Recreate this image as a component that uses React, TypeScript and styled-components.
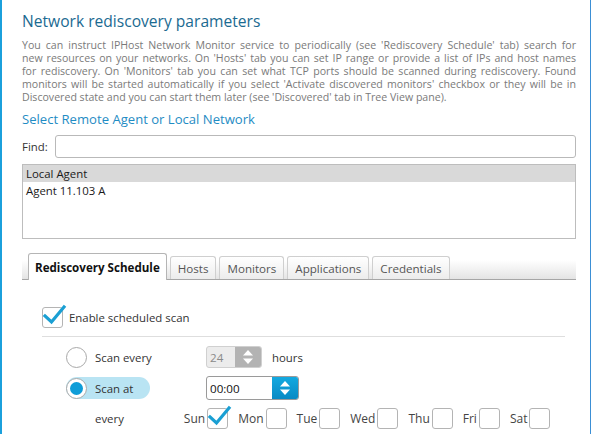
import React from 'react';
import styled, { createGlobalStyle } from 'styled-components';

const GlobalStyle = createGlobalStyle`
  html, body {
    margin: 0;
    padding: 0;
    background: #fff;
  }
  body {
    font-family: 'Open Sans', 'Liberation Sans', sans-serif;
  }
`;

// Styles

const Window = styled.div`
  width: 591px;
  height: 434px;
  box-sizing: border-box;
  border-left: 2px solid #1ba0dc;
  border-right: 1px solid #3b8fd5;
  background: #fff;
  overflow: hidden;
  display: flex;
  flex-direction: column;
  padding: 0 14px 0 20px;
`;

const Title = styled.h1`
  margin: 11px 0 0;
  font-size: 15.6px;
  line-height: 21px;
  font-weight: 500;
  color: #1b6a91;
`;

const Intro = styled.div`
  margin-top: 7px;
  font-size: 10.6px;
  line-height: 13px;
  color: #7a7a7a;
`;

const IntroLine = styled.div<{ $last?: boolean }>`
  text-align: ${(p) => (p.$last ? 'left' : 'justify')};
  text-align-last: ${(p) => (p.$last ? 'left' : 'justify')};
  white-space: nowrap;
`;

const Subtitle = styled.h2`
  margin: 6px 0 0;
  font-size: 13.1px;
  line-height: 18px;
  font-weight: 400;
  color: #1f8cc4;
`;

const FindRow = styled.div`
  margin-top: 7px;
  display: flex;
  align-items: center;
  gap: 7px;
`;

const Label = styled.span`
  font-size: 11.4px;
  color: #333;
  white-space: nowrap;
`;

const FindInput = styled.div`
  flex: 1;
  height: 21px;
  border: 1px solid #b9b9b9;
  border-radius: 3px;
  background: #fff;
`;

const List = styled.div`
  margin-top: 6px;
  height: 73px;
  border: 1px solid #bdbdbd;
  display: flex;
  flex-direction: column;
`;

const ListItem = styled.div<{ $selected?: boolean }>`
  height: 17px;
  line-height: 17px;
  padding-left: 3px;
  font-size: 11.4px;
  color: #1a1a1a;
  background: ${(p) => (p.$selected ? '#d9d9d9' : 'transparent')};
`;

const TabStrip = styled.div`
  margin-top: 13px;
  height: 27px;
  display: flex;
  align-items: flex-end;
  gap: 3px;
  padding-left: 6px;
  border-bottom: 1px solid #a6a6a6;
  background: linear-gradient(#ffffff 0%, #ffffff 30%, #e4e4e4 100%);
`;

const Tab = styled.div<{ $active?: boolean }>`
  height: ${(p) => (p.$active ? '26px' : '22px')};
  padding: 0 ${(p) => (p.$active ? '6px' : '7px')};
  display: flex;
  align-items: center;
  font-size: 11.6px;
  font-weight: ${(p) => (p.$active ? 700 : 400)};
  color: ${(p) => (p.$active ? '#111' : '#555')};
  border: 1px solid ${(p) => (p.$active ? '#b5b5b5' : '#cfcfcf')};
  border-bottom: none;
  border-radius: 3px 3px 0 0;
  background: ${(p) => (p.$active ? '#fff' : 'linear-gradient(#ffffff, #ececec)')};
  margin-bottom: ${(p) => (p.$active ? '-1px' : '0')};
`;

const Panel = styled.div`
  padding: 27px 11px 0 20px;
  display: flex;
  flex-direction: column;
`;

const EnableRow = styled.div`
  display: flex;
  align-items: center;
  gap: 6px;
  padding-bottom: 8px;
  border-bottom: 1px solid #dedede;
`;

const BoxWrap = styled.span`
  position: relative;
  width: 21px;
  height: 21px;
  flex: none;
`;

const Box = styled.span`
  display: block;
  width: 19px;
  height: 19px;
  border: 1px solid #b4b4b4;
  border-radius: 3px;
  background: #fff;
`;

const Tick = styled.svg`
  position: absolute;
  left: 2px;
  top: -2px;
  width: 22px;
  height: 21px;
  overflow: visible;
`;

const ScanGrid = styled.div`
  margin-top: 9px;
  padding-left: 24px;
  display: grid;
  grid-template-columns: 140px auto;
  row-gap: 8px;
  align-items: center;
`;

const RadioPill = styled.div<{ $active?: boolean }>`
  display: flex;
  align-items: center;
  gap: 8px;
  width: 84px;
  height: 22px;
  border-radius: 11px;
  background: ${(p) => (p.$active ? '#b9e4f3' : 'transparent')};
`;

const RadioCircle = styled.span<{ $on?: boolean }>`
  width: 19px;
  height: 19px;
  border: 1px solid #a9a9a9;
  border-radius: 50%;
  background: #fff;
  display: flex;
  align-items: center;
  justify-content: center;
  flex: none;
  &::after {
    content: '';
    display: ${(p) => (p.$on ? 'block' : 'none')};
    width: 13px;
    height: 13px;
    border-radius: 50%;
    background: #0e9dd8;
  }
`;

const Field = styled.div`
  display: flex;
  align-items: center;
  gap: 10px;
`;

const Spinner = styled.div<{ $width: number; $disabled?: boolean }>`
  width: ${(p) => p.$width}px;
  height: ${(p) => (p.$disabled ? 22 : 24)}px;
  display: flex;
  border: 1px solid ${(p) => (p.$disabled ? '#d0d0d0' : '#9a9a9a')};
  border-radius: 3px;
  background: ${(p) => (p.$disabled ? '#ececec' : '#fff')};
  box-sizing: border-box;
  overflow: hidden;
`;

const SpinValue = styled.span<{ $disabled?: boolean }>`
  flex: 1;
  padding-left: 3px;
  display: flex;
  align-items: center;
  font-size: 11.6px;
  color: ${(p) => (p.$disabled ? '#8a8a8a' : '#111')};
`;

const SpinButton = styled.span<{ $disabled?: boolean }>`
  width: 26px;
  display: flex;
  align-items: center;
  justify-content: center;
  background: ${(p) => (p.$disabled ? '#b3b3b3' : 'linear-gradient(#13a9e0, #0a8ac4)')};
`;

const EveryRow = styled.div`
  margin-top: 8px;
  display: flex;
  align-items: center;
  padding-left: 53px;
`;

const DaysRow = styled.div`
  margin-left: 60px;
  display: flex;
  align-items: center;
  gap: 10px;
`;

const Day = styled.label`
  display: flex;
  align-items: center;
  gap: 2px;
  font-size: 12px;
  color: #444;
`;

const Check = ({ checked }: { checked?: boolean }) => (
  <BoxWrap>
    <Box />
    {checked ? (
      <Tick viewBox="0 0 22 21">
        <path d="M1 11 L7.5 17 L20 2" fill="none" stroke="#1a9fd3" strokeWidth="3.2" strokeLinecap="square" />
      </Tick>
    ) : null}
  </BoxWrap>
);

const Arrows = () => (
  <svg width="12" height="16" viewBox="0 0 12 16">
    <path d="M6 1 L11 6.5 L1 6.5 Z" fill="#fff" />
    <path d="M6 15 L11 9.5 L1 9.5 Z" fill="#fff" />
  </svg>
);

const intro = [
  "You can instruct IPHost Network Monitor service to periodically (see 'Rediscovery Schedule' tab) search for",
  "new resources on your networks. On 'Hosts' tab you can set IP range or provide a list of IPs and host names",
  "for rediscovery. On 'Monitors' tab you can set what TCP ports should be scanned during rediscovery. Found",
  "monitors will be started automatically if you select 'Activate discovered monitors' checkbox or they will be in",
  "Discovered state and you can start them later (see 'Discovered' tab in Tree View pane).",
];

const tabs = ['Rediscovery Schedule', 'Hosts', 'Monitors', 'Applications', 'Credentials'];
const days = ['Sun', 'Mon', 'Tue', 'Wed', 'Thu', 'Fri', 'Sat'];

function App(): JSX.Element {
  return (
    <>
      <GlobalStyle />
      <Window>
        <Title>Network rediscovery parameters</Title>
        <Intro>
          {intro.map((line, i) => (
            <IntroLine key={line} $last={i === intro.length - 1}>{line}</IntroLine>
          ))}
        </Intro>
        <Subtitle>Select Remote Agent or Local Network</Subtitle>
        <FindRow>
          <Label>Find:</Label>
          <FindInput />
        </FindRow>
        <List>
          <ListItem $selected>Local Agent</ListItem>
          <ListItem>Agent 11.103 A</ListItem>
        </List>
        <TabStrip>
          {tabs.map((t, i) => (
            <Tab key={t} $active={i === 0}>{t}</Tab>
          ))}
        </TabStrip>
        <Panel>
          <EnableRow>
            <Check checked />
            <Label>Enable scheduled scan</Label>
          </EnableRow>
          <ScanGrid>
            <RadioPill>
              <RadioCircle />
              <Label>Scan every</Label>
            </RadioPill>
            <Field>
              <Spinner $width={56} $disabled>
                <SpinValue $disabled>24</SpinValue>
                <SpinButton $disabled><Arrows /></SpinButton>
              </Spinner>
              <Label>hours</Label>
            </Field>
            <RadioPill $active>
              <RadioCircle $on />
              <Label>Scan at</Label>
            </RadioPill>
            <Field>
              <Spinner $width={93}>
                <SpinValue>00:00</SpinValue>
                <SpinButton><Arrows /></SpinButton>
              </Spinner>
            </Field>
          </ScanGrid>
          <EveryRow>
            <Label>every</Label>
            <DaysRow>
              {days.map((d, i) => (
                <Day key={d}>
                  {d}
                  <Check checked={i === 0} />
                </Day>
              ))}
            </DaysRow>
          </EveryRow>
        </Panel>
      </Window>
    </>
  );
}

export default App;
